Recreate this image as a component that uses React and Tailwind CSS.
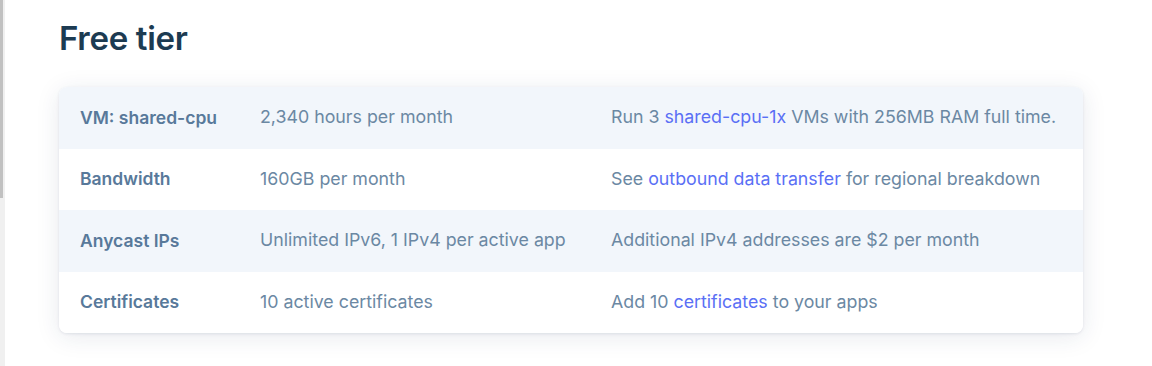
import React from 'react';

const rows = [
  {
    label: 'VM: shared-cpu',
    value: '2,340 hours per month',
    note: (
      <>
        Run 3 <a href="#" className="text-[#5a6ff5]">shared-cpu-1x</a> VMs with 256MB RAM full time.
      </>
    ),
  },
  {
    label: 'Bandwidth',
    value: '160GB per month',
    note: (
      <>
        See <a href="#" className="text-[#5a6ff5]">outbound data transfer</a> for regional breakdown
      </>
    ),
  },
  {
    label: 'Anycast IPs',
    value: 'Unlimited IPv6, 1 IPv4 per active app',
    note: <>Additional IPv4 addresses are $2 per month</>,
  },
  {
    label: 'Certificates',
    value: '10 active certificates',
    note: (
      <>
        Add 10 <a href="#" className="text-[#5a6ff5]">certificates</a> to your apps
      </>
    ),
  },
];

export default function App() {
  return (
    <div className="flex h-[366px] w-[1152px] bg-white font-['Inter',sans-serif] overflow-hidden">
      {/* scrollbar strip */}
      <div className="w-[5px] shrink-0 bg-[#f0f0f0]">
        <div className="h-[198px] w-[3px] bg-[#c1c1c1]" />
      </div>

      <div className="pl-[54px] pt-[16px]">
        <h2 className="text-[33px] font-semibold leading-[44px] tracking-[-0.3px] text-[#1c3b52]">
          Free tier
        </h2>

        <div className="mt-[27px] w-[1024px] overflow-hidden rounded-lg bg-white shadow-[0_4px_24px_rgba(30,50,90,0.10),0_1px_3px_rgba(30,50,90,0.10)]">
          {rows.map((row, i) => (
            <div
              key={row.label}
              className={`grid h-[61.5px] grid-cols-[180px_351px_1fr] items-center px-[21px] text-[17.8px] ${
                i % 2 === 0 ? 'bg-[#f2f6fb]' : 'bg-white'
              }`}
            >
              <div className="text-[17.5px] font-semibold text-[#58799a]">{row.label}</div>
              <div className="text-[#6b88a3]">{row.value}</div>
              <div className="text-[#6b88a3]">{row.note}</div>
            </div>
          ))}
        </div>
      </div>
    </div>
  );
}
